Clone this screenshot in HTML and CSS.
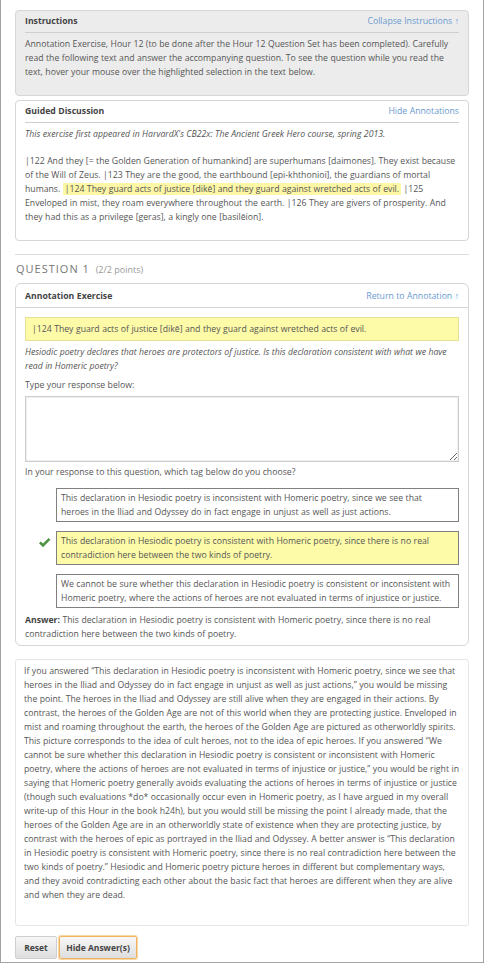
FILE: index.html
```html
<!DOCTYPE html>
<html lang="en">
<head>
<meta charset="utf-8">
<title>Annotation Exercise</title>
<link rel="stylesheet" href="styles.css">
</head>
<body>
<div class="page">
  <h2 class="unit-title">Hour 12 Annotation Exercise</h2>

  <section class="panel panel-grey">
    <div class="panel-head">
      <span class="panel-title">Instructions</span>
      <a class="panel-link" href="#">Collapse Instructions ↑</a>
    </div>
    <p class="panel-text">Annotation Exercise, Hour 12 (to be done after the Hour 12 Question Set has been completed). Carefully read the following text and answer the accompanying question. To see the question while you read the text, hover your mouse over the highlighted selection in the text below.</p>
  </section>

  <section class="panel panel-white">
    <div class="panel-head">
      <span class="panel-title">Guided Discussion</span>
      <a class="panel-link" href="#">Hide Annotations</a>
    </div>
    <p class="panel-text intro"><em>This exercise first appeared in HarvardX's CB22x: The Ancient Greek Hero course, spring 2013.</em></p>
    <p class="panel-text passage">|122 And they [= the Golden Generation of humankind] are superhumans [daimones]. They exist because of the Will of Zeus. |123 They are the good, the earthbound [epi-khthonioi], the guardians of mortal humans. <span class="hl">|124 They guard acts of justice [dikē] and they guard against wretched acts of evil.</span> |125 Enveloped in mist, they roam everywhere throughout the earth. |126 They are givers of prosperity. And they had this as a privilege [geras], a kingly one [basilēion].</p>
  </section>

  <hr class="divider">

  <h3 class="question-title">QUESTION 1 <span class="points">(2/2 points)</span></h3>

  <section class="qbox">
    <div class="qbox-head">
      <span class="panel-title">Annotation Exercise</span>
      <a class="panel-link" href="#">Return to Annotation ↑</a>
    </div>
    <div class="qbox-body">
      <div class="quote">|124 They guard acts of justice [dikē] and they guard against wretched acts of evil.</div>
      <p class="prompt"><em>Hesiodic poetry declares that heroes are protectors of justice. Is this declaration consistent with what we have read in Homeric poetry?</em></p>
      <p class="label">Type your response below:</p>
      <textarea class="response"></textarea>
      <p class="label tag-label">In your response to this question, which tag below do you choose?</p>
      <ul class="options">
        <li class="option-row">
          <span class="mark"></span>
          <span class="option">This declaration in Hesiodic poetry is inconsistent with Homeric poetry, since we see that heroes in the Iliad and Odyssey do in fact engage in unjust as well as just actions.</span>
        </li>
        <li class="option-row">
          <span class="mark"><svg width="13" height="11" viewBox="0 0 13 11"><path d="M1 6.2 L2.8 4.4 L5 6.6 L10.6 1 L12.4 2.8 L5 10.2 Z" fill="#4f9443"/></svg></span>
          <span class="option selected">This declaration in Hesiodic poetry is consistent with Homeric poetry, since there is no real contradiction here between the two kinds of poetry.</span>
        </li>
        <li class="option-row">
          <span class="mark"></span>
          <span class="option">We cannot be sure whether this declaration in Hesiodic poetry is consistent or inconsistent with Homeric poetry, where the actions of heroes are not evaluated in terms of injustice or justice.</span>
        </li>
      </ul>
      <p class="answer"><strong>Answer:</strong> This declaration in Hesiodic poetry is consistent with Homeric poetry, since there is no real contradiction here between the two kinds of poetry.</p>
    </div>
  </section>

  <section class="explanation">
    <p>If you answered “This declaration in Hesiodic poetry is inconsistent with Homeric poetry, since we see that heroes in the Iliad and Odyssey do in fact engage in unjust as well as just actions,” you would be missing the point. The heroes in the Iliad and Odyssey are still alive when they are engaged in their actions. By contrast, the heroes of the Golden Age are not of this world when they are protecting justice. Enveloped in mist and roaming throughout the earth, the heroes of the Golden Age are pictured as otherworldly spirits. This picture corresponds to the idea of cult heroes, not to the idea of epic heroes. If you answered “We cannot be sure whether this declaration in Hesiodic poetry is consistent or inconsistent with Homeric poetry, where the actions of heroes are not evaluated in terms of injustice or justice,” you would be right in saying that Homeric poetry generally avoids evaluating the actions of heroes in terms of injustice or justice (though such evaluations *do* occasionally occur even in Homeric poetry, as I have argued in my overall write-up of this Hour in the book h24h), but you would still be missing the point I already made, that the heroes of the Golden Age are in an otherworldly state of existence when they are protecting justice, by contrast with the heroes of epic as portrayed in the Iliad and Odyssey. A better answer is “This declaration in Hesiodic poetry is consistent with Homeric poetry, since there is no real contradiction here between the two kinds of poetry.” Hesiodic and Homeric poetry picture heroes in different but complementary ways, and they avoid contradicting each other about the basic fact that heroes are different when they are alive and when they are dead.</p>
  </section>

  <div class="actions">
    <button class="btn" type="button">Reset</button>
    <button class="btn btn-focus" type="button">Hide Answer(s)</button>
  </div>
</div>
</body>
</html>
```
FILE: styles.css
```css
* { box-sizing: border-box; }
html, body { margin: 0; padding: 0; background: #fff; }
body {
  font-family: "Open Sans", "Noto Sans", "Liberation Sans", sans-serif;
  font-size: 8.7px;
  line-height: 14px;
  word-spacing: 0.2px;
  color: #555;
}
.page {
  width: 484px;
  height: 963px;
  overflow: hidden;
  border-left: 1px solid #a3a3a3;
  border-right: 1px solid #a3a3a3;
  border-bottom: 1px solid #a3a3a3;
  padding: 0 14px;
}
.unit-title {
  margin: -12px 0 0 4px;
  height: 14px;
  font-size: 14px;
  line-height: 14px;
  font-weight: 600;
  color: #dedede;
  letter-spacing: 1px;
  text-transform: uppercase;
}
p { margin: 0; }
a { text-decoration: none; }

.panel {
  border: 1px solid #d6d6d6;
  border-radius: 4px;
  padding: 0 9px;
}
.panel-grey {
  margin-top: 8px;
  background: #ececec;
  padding-bottom: 16px;
}
.panel-white {
  margin-top: 4px;
  background: #fff;
  padding-bottom: 16px;
}
.panel-head {
  display: flex;
  justify-content: space-between;
  align-items: center;
  padding: 3px 0 4px;
  border-bottom: 1px solid #cfcfcf;
}
.panel-title {
  font-weight: 700;
  color: #444;
}
.panel-link {
  color: #6a9ad0;
}
.panel-text { margin-top: 4px; }
.intro { margin-top: 4px; }
.passage { margin-top: 13px; }
.hl {
  background: #fdf7a6;
  padding: 0 2px;
}

.divider {
  margin: 13px 0 0;
  border: 0;
  border-top: 1px solid #dcdcdc;
}
.question-title {
  margin: 6px 0 0 1px;
  font-size: 11px;
  line-height: 16px;
  font-weight: 400;
  color: #777;
  letter-spacing: 1px;
  word-spacing: 0;
}
.points {
  font-size: 9px;
  letter-spacing: 0;
  color: #999;
  margin-left: 2px;
}

.qbox {
  margin-top: 5px;
  border: 1px solid #d6d6d6;
  border-radius: 6px;
  background: #fff;
}
.qbox-head {
  display: flex;
  justify-content: space-between;
  align-items: center;
  padding: 5px 9px 4px;
  border-bottom: 1px solid #d6d6d6;
}
.qbox-body { padding: 9px 9px 4px; }
.quote {
  background: #fdfaa8;
  border: 1px solid #e8e195;
  padding: 4px 6px;
  color: #555;
}
.prompt { margin-top: 4px; }
.label { margin-top: 5px; }
.response {
  display: block;
  width: 100%;
  height: 66px;
  margin: 4px 0 0;
  border: 1px solid #cdcdcd;
  box-shadow: inset 0 0 0 1px #efefef;
  resize: vertical;
  background: #fff;
}
.tag-label { margin-top: 3px; }
.options {
  list-style: none;
  margin: 9px 0 0;
  padding: 0;
  display: flex;
  flex-direction: column;
  gap: 9px;
}
.option-row {
  display: flex;
  align-items: flex-start;
}
.mark {
  flex: 0 0 31px;
  display: flex;
  justify-content: flex-end;
  padding: 6px 5px 0 0;
}
.option {
  flex: 1;
  border: 1px solid #808080;
  padding: 2px 7px 2px 4px;
  color: #555;
  background: #fff;
}
.option.selected { background: #fdfba8; }
.answer { margin-top: 5px; }
.answer strong { color: #444; }

.explanation {
  margin-top: 13px;
  border: 1px solid #e6e6e6;
  border-radius: 3px;
  padding: 4px 9px 23px 8px;
}

.actions {
  display: flex;
  gap: 2px;
  margin-top: 10px;
}
.btn {
  height: 23px;
  font-family: "Open Sans", "Noto Sans", "Liberation Sans", sans-serif;
  font-size: 8.5px;
  font-weight: 700;
  color: #444;
  word-spacing: 0;
  background: linear-gradient(#f7f7f7, #dedede);
  border: 1px solid #cfcfcf;
  border-radius: 2px;
  padding: 0;
}
.btn:first-child { width: 42px; }
.btn-focus {
  width: 78px;
  border: 1px solid #f0b35f;
  box-shadow: 0 0 0 1px #f7d7a6;
}
```
